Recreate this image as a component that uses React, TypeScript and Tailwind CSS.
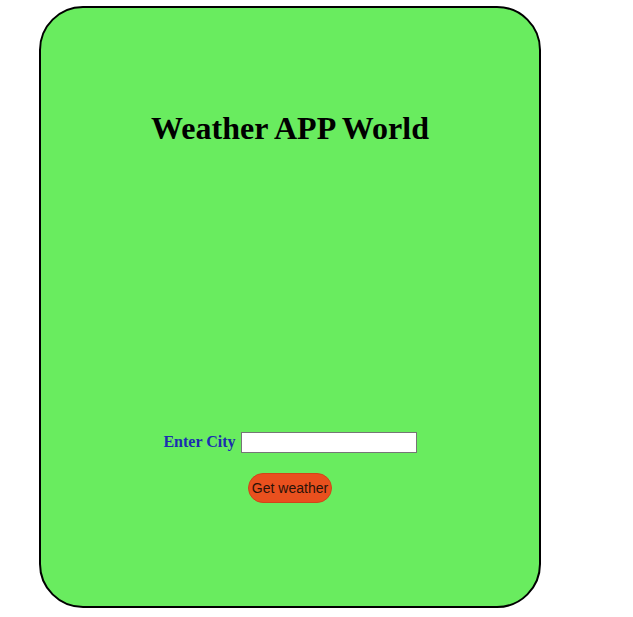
export default function App() {
  return (
    <div className="min-h-screen bg-white pl-[39px] pt-[6px]">
      <div className="flex h-[602px] w-[502px] flex-col items-center rounded-[44px] border-2 border-black bg-[#69ec5f]">
        <h1 className="mt-[103px] font-['Liberation_Serif',serif] text-[32px] font-bold leading-[35px] text-black">
          Weather APP World
        </h1>
        <div className="mt-[284px] flex items-center gap-[5px]">
          <label
            htmlFor="city"
            className="font-['Liberation_Serif',serif] text-[16px] font-bold text-[#1a2fb0]"
          >
            Enter City
          </label>
          <input
            id="city"
            type="text"
            className="h-[21px] w-[176px] border border-[#767676] bg-white px-1 text-sm"
          />
        </div>
        <button
          type="button"
          className="mt-[19px] h-[30px] w-[84px] rounded-full border border-[#d0461a] bg-[#e9501e] font-['Liberation_Sans',sans-serif] text-[14px] text-[#2a1208]"
        >
          Get weather
        </button>
      </div>
    </div>
  );
}
